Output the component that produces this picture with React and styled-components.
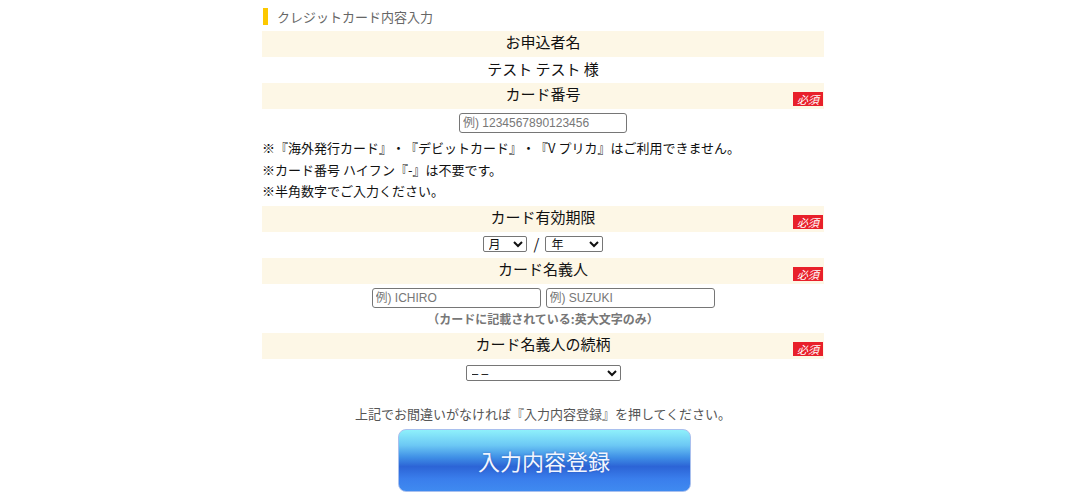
import styled, { createGlobalStyle } from "styled-components";

const Global = createGlobalStyle`
  body {
    margin: 0;
    background: #fff;
    font-family: "Noto Sans CJK JP", "Noto Sans", sans-serif;
    color: #111;
    text-spacing-trim: space-all;
  }
`

export default function App() {
    return (
        <Page>
            <Global />
            <Title>クレジットカード内容入力</Title>

            <Head>お申込者名</Head>
            <Value>テスト テスト 様</Value>

            <Head>カード番号<Badge>必須</Badge></Head>
            <Field>
                <TextBox width="168px" placeholder="例) 1234567890123456" />
            </Field>
            <Notes>
                <p>※『海外発行カード』・『デビットカード』・『V プリカ』はご利用できません。</p>
                <p>※カード番号 ハイフン『-』は不要です。</p>
                <p>※半角数字でご入力ください。</p>
            </Notes>

            <Head>カード有効期限<Badge>必須</Badge></Head>
            <Field pad="4px 0 6px">
                <Select width="44px"><option>月</option></Select>
                <Slash>/</Slash>
                <Select width="58px"><option>年</option></Select>
            </Field>

            <Head>カード名義人<Badge>必須</Badge></Head>
            <Field gap="5px" pad="4px 0 0">
                <TextBox width="169px" placeholder="例) ICHIRO" />
                <TextBox width="169px" placeholder="例) SUZUKI" />
            </Field>
            <Caption>（カードに記載されている:英大文字のみ）</Caption>

            <Head>カード名義人の続柄<Badge>必須</Badge></Head>
            <Field pad="6px 0 0">
                <Select width="155px"><option>– –</option></Select>
            </Field>

            <Confirm>上記でお間違いがなければ『入力内容登録』を押してください。</Confirm>
            <Submit>入力内容登録</Submit>
        </Page>
    )
}

const Page = styled.div`
    width: 562px;
    margin: 0 auto;
    padding-top: 8px;
    position: relative;
    left: -2px;
    display: flex;
    flex-direction: column;
`

const Title = styled.h2`
    margin: 0 0 6px 1px;
    height: 17px;
    border-left: 5px solid #fcc800;
    padding-left: 9px;
    font-size: 13px;
    font-weight: normal;
    line-height: 17px;
    color: #666;
`

const Head = styled.div`
    position: relative;
    height: 26px;
    background: #fdf7e6;
    font-size: 15px;
    line-height: 22px;
    text-align: center;
    color: #111;
`

const Badge = styled.span`
    position: absolute;
    right: 1px;
    bottom: 3px;
    height: 14px;
    padding: 0 4px;
    background: #e8202a;
    color: #fff;
    font-size: 11px;
    line-height: 14px;
    font-style: italic;
`

const Value = styled.div`
    height: 26px;
    font-size: 15px;
    line-height: 24px;
    text-align: center;
`

const Field = styled.div`
    display: flex;
    justify-content: center;
    align-items: center;
    gap: ${p => p.gap || "0"};
    padding: ${p => p.pad || "4px 0 4px"};
`

const TextBox = styled.input`
    box-sizing: border-box;
    width: ${p => p.width};
    height: 20px;
    border: 1px solid #767676;
    border-radius: 3px;
    padding: 0 3px;
    font-family: "Liberation Sans", "Noto Sans CJK JP", sans-serif;
    font-size: 12px;
    &::placeholder { color: #777; }
`

const Select = styled.select`
    box-sizing: border-box;
    width: ${p => p.width};
    height: 16px;
    border: 1px solid #767676;
    border-radius: 2px;
    padding: 0 0 0 1px;
    font-size: 12px;
    background: #fff;
    color: #111;
    font-family: "Liberation Sans", "Noto Sans CJK JP", sans-serif;
`

const Slash = styled.span`
    margin: 0 6px 0 7px;
    font-size: 15px;
    line-height: 16px;
`

const Notes = styled.div`
    padding: 0 0 4px;
    p {
        margin: 0;
        font-size: 13px;
        line-height: 21.5px;
    }
`

const Caption = styled.div`
    height: 25px;
    text-align: center;
    font-size: 12px;
    font-weight: bold;
    line-height: 22px;
    color: #777;
`

const Confirm = styled.div`
    margin-top: 23px;
    text-align: center;
    font-size: 13px;
    color: #555;
    line-height: 20px;
`

const Submit = styled.button`
    align-self: center;
    margin: 5px 0 0 2px;
    width: 293px;
    height: 63px;
    border: 1px solid #a9c0ee;
    border-radius: 8px;
    background: linear-gradient(
        to bottom,
        #8ef0fb 0%,
        #6cc8f4 25%,
        #3f8fe6 45%,
        #2c64d6 60%,
        #3a7eec 80%,
        #3f8af0 100%
    );
    color: #f2f6ff;
    font-family: "Noto Sans CJK JP", sans-serif;
    font-size: 22px;
    text-shadow: 0 0 2px rgba(40, 70, 160, 0.6);
    cursor: pointer;
`
